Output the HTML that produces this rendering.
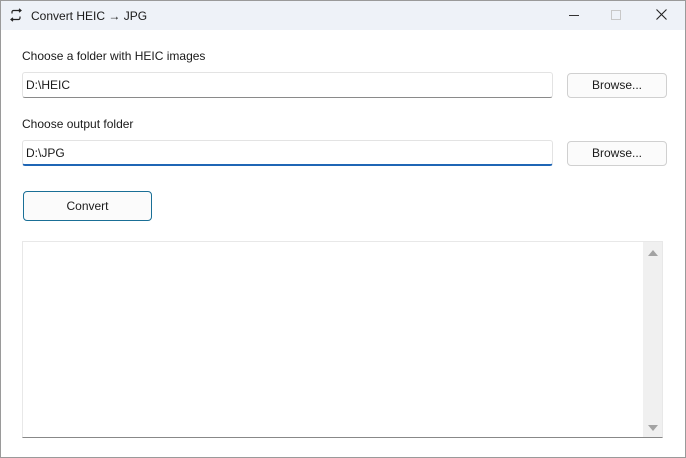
<!DOCTYPE html>
<html><head><meta charset="utf-8"><style>
*{box-sizing:border-box;margin:0;padding:0}
html,body{width:686px;height:458px;overflow:hidden;background:#fff;font-family:"Liberation Sans",sans-serif;font-size:12px;color:#1a1a1a}
.win{position:absolute;left:0;top:0;width:686px;height:458px;border:1px solid #9a9a9a;background:#fff}
.title{position:absolute;left:0;top:0;width:684px;height:29px;background:#eef2f8}
.title .t{position:absolute;left:30px;top:8px;font-size:12px}
.abs{position:absolute}
.lbl{position:absolute;left:21px;font-size:12px}
.inp{position:absolute;left:21px;width:531px;height:26px;border:1px solid #e3e3e3;border-bottom:1px solid #8a8a8a;border-radius:3px;padding:5px 3px;font-size:12px;background:#fff}
.inp.f{border-bottom:2px solid #1f66b5}
.btn{position:absolute;left:566px;width:100px;height:25px;border:1px solid #d0d0d0;border-radius:4px;background:#fbfbfb;text-align:center;line-height:23px;font-size:12px}
.conv{position:absolute;left:22px;top:190px;width:129px;height:30px;border:1px solid #1a6f96;border-radius:4px;background:#fbfbfb;text-align:center;line-height:28px}
.log{position:absolute;left:21px;top:240px;width:641px;height:197px;border:1px solid #e8e8e8;border-bottom:1px solid #888;background:#fff}
.sb{position:absolute;right:0;top:0;width:19px;height:195px;background:#f0f0f0}
</style></head><body><div class="win">
<div class="title">
<svg class="abs" style="left:8px;top:7px" width="14" height="14" viewBox="0 0 14 14" fill="none" stroke="#222" stroke-width="1.2"><path d="M3 5.5V4a1.5 1.5 0 0 1 1.5-1.5H12M10 0.8 12 2.5 10 4.2M11 8.5V10a1.5 1.5 0 0 1-1.5 1.5H2M4 9.8 2 11.5 4 13.2"/></svg>
<div class="t">Convert HEIC → JPG</div>
<div class="abs" style="left:568px;top:14px;width:10px;height:1px;background:#333"></div>
<div class="abs" style="left:610px;top:9px;width:10px;height:10px;border:1px solid #c8c8c8"></div>
<svg class="abs" style="left:655px;top:8px" width="11" height="11" viewBox="0 0 11 11" stroke="#222" stroke-width="1.1"><path d="M0.5 0.5 10.5 10.5M10.5 0.5 0.5 10.5"/></svg>
</div>
<div class="lbl" style="top:48px">Choose a folder with HEIC images</div>
<div class="inp" style="top:71px">D:\HEIC</div>
<div class="btn" style="top:72px">Browse...</div>
<div class="lbl" style="top:116px">Choose output folder</div>
<div class="inp f" style="top:139px">D:\JPG</div>
<div class="btn" style="top:140px">Browse...</div>
<div class="conv">Convert</div>
<div class="log"><div class="sb">
<div class="abs" style="left:5px;top:8px;width:0;height:0;border-left:5px solid transparent;border-right:5px solid transparent;border-bottom:6px solid #a3a3a3"></div>
<div class="abs" style="left:5px;top:183px;width:0;height:0;border-left:5px solid transparent;border-right:5px solid transparent;border-top:6px solid #a3a3a3"></div>
</div></div>
</div></body></html>
